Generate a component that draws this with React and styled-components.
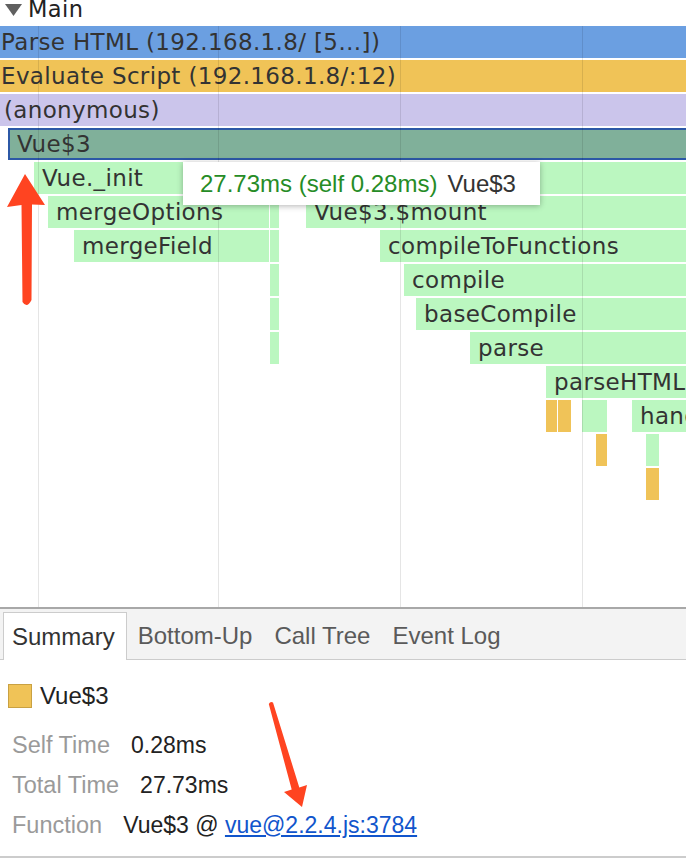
import styled, { createGlobalStyle } from "styled-components";

const GlobalStyle = createGlobalStyle`
  html, body {
    margin: 0;
    padding: 0;
    background: #ffffff;
  }
`;

const FLAME_FONT = `"DejaVu Sans", "Lucida Grande", sans-serif`;
const UI_FONT = `"Liberation Sans", Helvetica, Arial, sans-serif`;

const barColors = {
  parse: "#6b9fe1",
  script: "#f0c357",
  anon: "#cbc5eb",
  selected: "#80b09a",
  js: "#bbf7c0",
  yellow: "#f0c358",
};

// each row: bars with left / width in chart pixels
const flameRows = [
  [{ left: -7, width: 800, kind: "parse", label: "Parse HTML (192.168.1.8/ [5…])" }],
  [{ left: -7, width: 800, kind: "script", label: "Evaluate Script (192.168.1.8/:12)" }],
  [{ left: -4, width: 800, kind: "anon", label: "(anonymous)" }],
  [{ left: 8, width: 800, kind: "selected", label: "Vue$3" }],
  [{ left: 34, width: 800, kind: "js", label: "Vue._init" }],
  [
    { left: 48, width: 221, kind: "js", label: "mergeOptions" },
    { left: 270, width: 9, kind: "js" },
    { left: 306, width: 500, kind: "js", label: "Vue$3.$mount" },
  ],
  [
    { left: 74, width: 195, kind: "js", label: "mergeField" },
    { left: 270, width: 9, kind: "js" },
    { left: 380, width: 400, kind: "js", label: "compileToFunctions" },
  ],
  [
    { left: 270, width: 9, kind: "js" },
    { left: 404, width: 400, kind: "js", label: "compile" },
  ],
  [
    { left: 270, width: 9, kind: "js" },
    { left: 416, width: 400, kind: "js", label: "baseCompile" },
  ],
  [
    { left: 270, width: 9, kind: "js" },
    { left: 470, width: 400, kind: "js", label: "parse" },
  ],
  [{ left: 546, width: 300, kind: "js", label: "parseHTML" }],
  [
    { left: 546, width: 11, kind: "yellow" },
    { left: 558, width: 13, kind: "yellow" },
    { left: 582, width: 25, kind: "js" },
    { left: 632, width: 200, kind: "js", label: "handleStartTag" },
  ],
  [
    { left: 596, width: 11, kind: "yellow" },
    { left: 646, width: 13, kind: "js" },
  ],
  [{ left: 646, width: 13, kind: "yellow" }],
];

const gridLines = [38, 218, 400, 582];

const details = [
  { label: "Self Time", value: "0.28ms" },
  { label: "Total Time", value: "27.73ms" },
  { label: "Function", value: "Vue$3 @ ", link: "vue@2.2.4.js:3784" },
];

const tabs = ["Summary", "Bottom-Up", "Call Tree", "Event Log"];

export default function App() {
  return (
    <Page>
      <GlobalStyle />
      <Header>
        <Caret viewBox="0 0 26 18">
          <polygon points="5,4 22,4 13.5,16" />
        </Caret>
        Main
      </Header>

      <FlameChart>
        <Rows>
          {flameRows.map((row, i) => (
            <Row key={i}>
              {row.map((bar, j) => (
                <Bar
                  key={j}
                  $kind={bar.kind}
                  style={{ left: bar.left, width: bar.width }}
                >
                  {bar.label}
                </Bar>
              ))}
            </Row>
          ))}
        </Rows>
        {gridLines.map((x) => (
          <GridLine key={x} style={{ left: x }} />
        ))}
        <Tooltip>
          <TooltipTime>27.73ms (self 0.28ms)</TooltipTime>
          <TooltipName>Vue$3</TooltipName>
        </Tooltip>
      </FlameChart>

      <TabBar>
        {tabs.map((t, i) => (
          <Tab key={t} $active={i === 0}>
            {t}
          </Tab>
        ))}
      </TabBar>

      <Summary>
        <Title>
          <Swatch />
          Vue$3
        </Title>
        {details.map((d) => (
          <DetailRow key={d.label}>
            <DetailLabel>{d.label}</DetailLabel>
            <DetailValue>
              {d.value}
              {d.link && <Link href="#">{d.link}</Link>}
            </DetailValue>
          </DetailRow>
        ))}
      </Summary>

      <Annotations viewBox="0 0 686 866">
        <path d="M22.5,302 L21.5,205 L7,207 L25,174 L45,205 L32,204.5 L31.5,300 Q27,309 22.5,302 Z" />
        <path d="M268.8,704 L291.7,789.6 L284,791.9 L302,807 L307,785.1 L299.3,787.4 L273,702.6 Q270.5,700.8 268.8,704 Z" />
      </Annotations>
    </Page>
  );
}

const Page = styled.div`
  position: relative;
  width: 686px;
  height: 866px;
  overflow: hidden;
  display: flex;
  flex-direction: column;
  background: #ffffff;
`;

const Header = styled.div`
  height: 26px;
  display: flex;
  align-items: flex-start;
  gap: 2px;
  font-family: ${FLAME_FONT};
  font-size: 22.5px;
  letter-spacing: 0.4px;
  line-height: 18px;
  color: #222;
`;

const Caret = styled.svg`
  width: 26px;
  height: 18px;
  fill: #606060;
`;

const FlameChart = styled.div`
  position: relative;
  height: 581px;
  overflow: hidden;
`;

const Rows = styled.div`
  display: flex;
  flex-direction: column;
  gap: 2px;
`;

const Row = styled.div`
  position: relative;
  height: 32px;
`;

const Bar = styled.div`
  position: absolute;
  top: 0;
  height: 32px;
  box-sizing: border-box;
  padding-left: ${({ $kind }) => ($kind === "selected" ? "7px" : "8px")};
  background: ${({ $kind }) => barColors[$kind]};
  border: ${({ $kind }) => ($kind === "selected" ? "2px solid #2c58a6" : "none")};
  border-right: none;
  font-family: ${FLAME_FONT};
  font-size: 23px;
  letter-spacing: 0.35px;
  line-height: ${({ $kind }) => ($kind === "selected" ? "28px" : "32px")};
  color: #333;
  white-space: nowrap;
  overflow: hidden;
`;

const GridLine = styled.div`
  position: absolute;
  top: 0;
  bottom: 0;
  width: 1px;
  background: rgba(0, 0, 0, 0.1);
`;

const Tooltip = styled.div`
  position: absolute;
  left: 183px;
  top: 136px;
  width: 357px;
  height: 43px;
  box-sizing: border-box;
  padding-left: 17px;
  display: flex;
  align-items: center;
  gap: 10px;
  background: #ffffff;
  box-shadow: 0 1px 6px rgba(0, 0, 0, 0.3);
  font-family: ${UI_FONT};
  font-size: 24px;
  white-space: nowrap;
`;

const TooltipTime = styled.span`
  color: #268c26;
`;

const TooltipName = styled.span`
  color: #333;
`;

const TabBar = styled.div`
  display: flex;
  align-items: flex-end;
  height: 53px;
  box-sizing: border-box;
  padding-left: 3px;
  border-top: 2px solid #a8a8a8;
  border-bottom: 1px solid #cccccc;
  background: #f3f3f3;
`;

const Tab = styled.div`
  height: 48px;
  box-sizing: border-box;
  margin-bottom: -1px;
  display: flex;
  align-items: center;
  font-family: ${UI_FONT};
  font-size: 24px;
  ${({ $active }) =>
    $active
      ? `
    padding: 0 11px 0 8px;
    background: #ffffff;
    border: 1px solid #cccccc;
    border-bottom: none;
    color: #333;
  `
      : `
    padding: 0 11px;
    color: #5a5a5a;
  `}
`;

const Summary = styled.div`
  padding: 24px 0 11px;
  border-bottom: 2px solid #cccccc;
  font-family: ${UI_FONT};
`;

const Title = styled.div`
  display: flex;
  align-items: center;
  gap: 8px;
  height: 24px;
  padding-left: 8px;
  margin-bottom: 17px;
  font-size: 24px;
  color: #222;
`;

const Swatch = styled.div`
  width: 22px;
  height: 22px;
  background: #f0c357;
  border: 1px solid #c9a142;
`;

const DetailRow = styled.div`
  display: flex;
  align-items: center;
  height: 40px;
  padding-left: 12px;
  font-size: 23.5px;
`;

const DetailLabel = styled.span`
  color: #9a9a9a;
  margin-right: 21px;
`;

const DetailValue = styled.span`
  color: #222;
  font-size: 23px;
  white-space: pre;
`;

const Link = styled.a`
  color: #1155cc;
  text-decoration: underline;
`;

const Annotations = styled.svg`
  position: absolute;
  left: 0;
  top: 0;
  width: 686px;
  height: 866px;
  pointer-events: none;
  fill: #ff4421;
`;
